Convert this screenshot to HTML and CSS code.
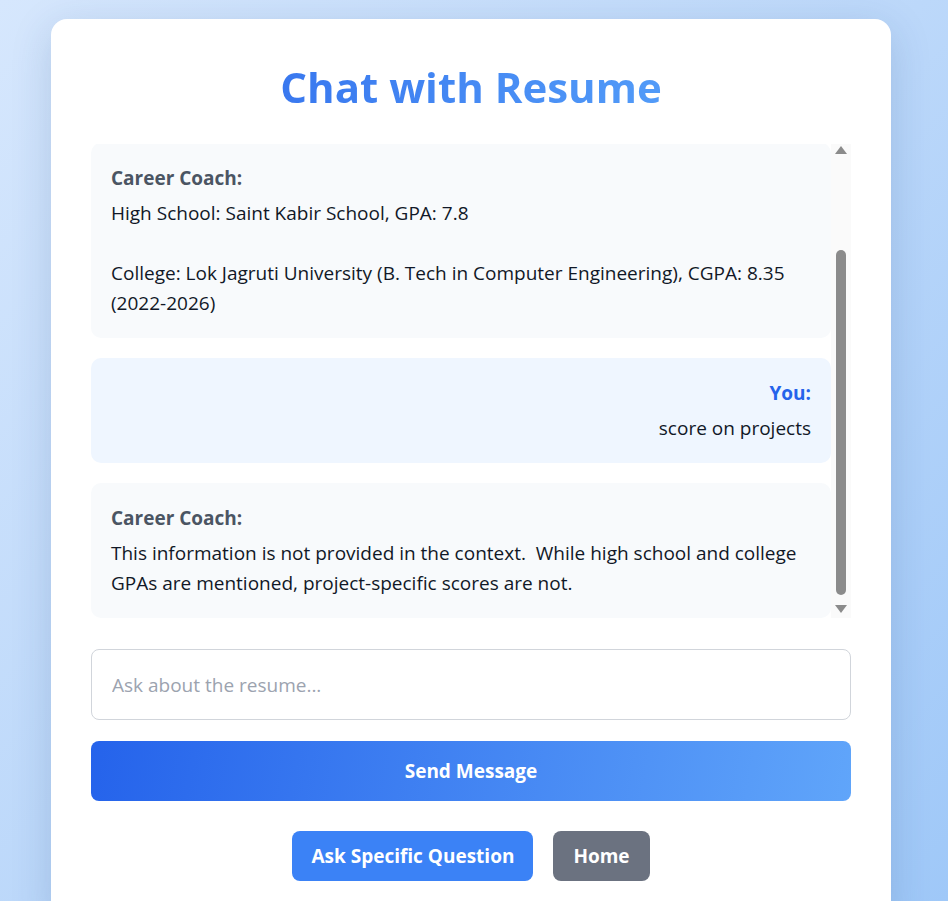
FILE: index.html
```html
<!DOCTYPE html>
<html lang="en">
<head>
<meta charset="utf-8">
<title>Chat with Resume</title>
<link rel="stylesheet" href="styles.css">
</head>
<body>
<main class="card">
  <h1 class="title"><span class="title-text">Chat with Resume</span></h1>
  <div class="chat-wrap">
    <div class="chat" id="chat">
      <div class="msg msg-user">
        <div class="label label-user">You:</div>
        <div class="text">what is my education</div>
      </div>
      <div class="msg msg-bot">
        <div class="label label-bot">Career Coach:</div>
        <div class="text">High School: Saint Kabir School, GPA: 7.8

College: Lok Jagruti University (B. Tech in Computer Engineering), CGPA: 8.35 (2022-2026)</div>
      </div>
      <div class="msg msg-user">
        <div class="label label-user">You:</div>
        <div class="text">score on projects</div>
      </div>
      <div class="msg msg-bot">
        <div class="label label-bot">Career Coach:</div>
        <div class="text">This information is not provided in the context.  While high school and college GPAs are mentioned, project-specific scores are not.</div>
      </div>
    </div>
    <div class="scrollbar" aria-hidden="true">
      <div class="sb-arrow sb-up"><svg width="12" height="8" viewBox="0 0 12 8"><polygon points="6,0 12,8 0,8" fill="#8b8b8b"/></svg></div>
      <div class="sb-track"><div class="sb-thumb"></div></div>
      <div class="sb-arrow sb-down"><svg width="12" height="8" viewBox="0 0 12 8"><polygon points="0,0 12,0 6,8" fill="#8b8b8b"/></svg></div>
    </div>
  </div>
  <form class="composer">
    <input class="input" type="text" placeholder="Ask about the resume...">
    <button class="send" type="button">Send Message</button>
  </form>
  <div class="actions">
    <button class="btn btn-blue" type="button">Ask Specific Question</button>
    <button class="btn btn-gray" type="button">Home</button>
  </div>
</main>
<script src="script.js"></script>
</body>
</html>
```
FILE: script.js
```js
var chat = document.getElementById('chat');
chat.scrollTop = chat.scrollHeight;
```
FILE: styles.css
```css
* { box-sizing: border-box; }
html, body { height: 100%; }
body {
  margin: 0;
  padding: 19px 6px 0 0;
  font-family: "Open Sans", "Noto Sans", sans-serif;
  background: linear-gradient(135deg, #d6e7fd 0%, #bcd8fa 50%, #9fc8f8 100%);
  display: flex;
  justify-content: center;
  overflow: hidden;
}
.card {
  width: 840px;
  background: #fff;
  border-radius: 16px;
  padding: 40px 40px 40px;
  box-shadow: 0 10px 40px rgba(30, 64, 120, 0.18);
  align-self: flex-start;
}
.title {
  margin: 0 0 29px;
  text-align: center;
  font-size: 42px;
  line-height: 56px;
  font-weight: 700;
}
.title-text {
  display: inline-block;
  background: linear-gradient(90deg, #3978ef, #529bf8);
  -webkit-background-clip: text;
  background-clip: text;
  color: transparent;
}
.chat-wrap {
  display: flex;
  height: 474px;
}
.chat {
  flex: 1;
  min-width: 0;
  overflow-y: scroll;
  scrollbar-width: none;
  display: flex;
  flex-direction: column;
  gap: 20px;
}
.chat::-webkit-scrollbar { display: none; }
.scrollbar {
  width: 20px;
  flex-shrink: 0;
  background: #fafafa;
  display: flex;
  flex-direction: column;
}
.sb-arrow {
  height: 16px;
  display: flex;
  justify-content: center;
  flex-shrink: 0;
}
.sb-up { padding-top: 2px; }
.sb-down { padding-top: 3px; }
.sb-arrow svg { display: block; }
.sb-track {
  flex: 1;
  display: flex;
  flex-direction: column;
  justify-content: flex-end;
  align-items: center;
  padding-bottom: 7px;
}
.sb-thumb {
  width: 10px;
  height: 345px;
  border-radius: 5px;
  background: #8b8b8b;
}
.msg {
  border-radius: 10px;
  padding: 20px;
  font-size: 19px;
  line-height: 30px;
  color: #111827;
  flex-shrink: 0;
}
.msg-bot { background: #f8fafc; }
.msg-user { background: #eff6ff; text-align: right; }
.label {
  font-weight: 700;
  margin-bottom: 5px;
}
.label-bot { color: #4b5563; }
.label-user { color: #2563eb; }
.text { white-space: pre-wrap; }
.composer {
  margin: 31px 0 0;
  display: flex;
  flex-direction: column;
  gap: 21px;
}
.input {
  height: 71px;
  border: 1px solid #d1d5db;
  border-radius: 8px;
  padding: 0 20px;
  font: inherit;
  font-size: 19px;
  color: #111827;
  outline: none;
}
.input::placeholder { color: #9ca3af; }
.send {
  height: 60px;
  border: 0;
  border-radius: 8px;
  background: linear-gradient(100deg, #2563eb 0%, #60a5fa 100%);
  color: #fff;
  font: inherit;
  font-size: 19px;
  font-weight: 700;
}
.actions {
  margin-top: 30px;
  display: flex;
  justify-content: center;
  gap: 20px;
}
.btn {
  height: 50px;
  padding: 0 19px;
  border: 0;
  border-radius: 8px;
  color: #fff;
  font: inherit;
  font-size: 19px;
  font-weight: 700;
}
.btn-blue { background: #3b82f6; }
.btn-gray { background: #6b7280; padding: 0 20px; }
```
